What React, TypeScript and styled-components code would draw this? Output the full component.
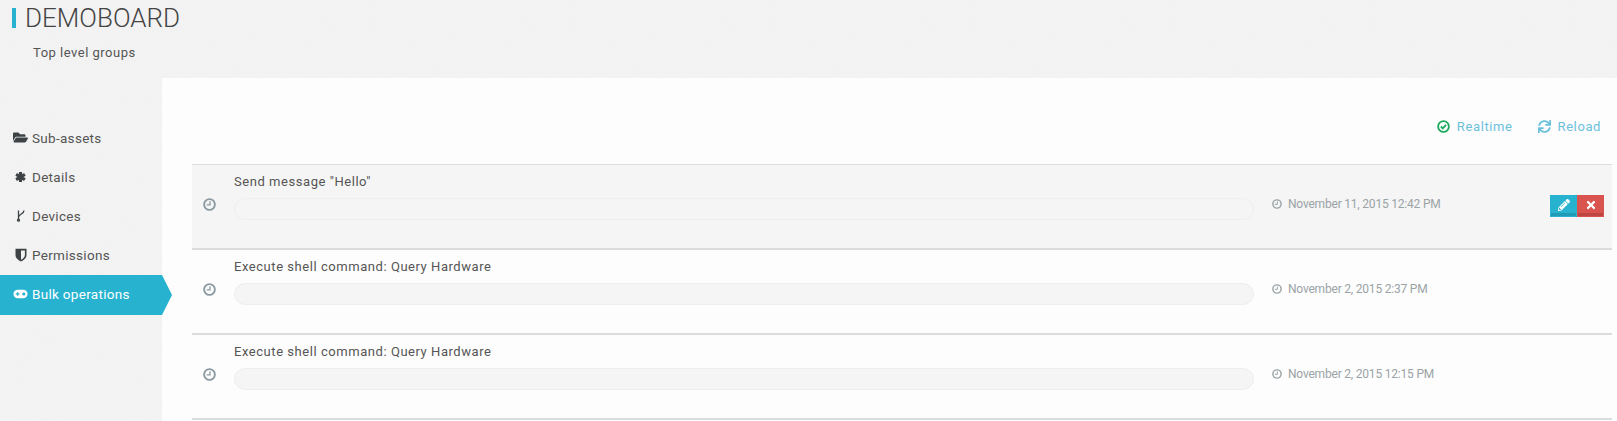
import React from "react"
import styled, { createGlobalStyle } from "styled-components"
import { FaFolderOpen, FaSync, FaPencilAlt, FaTimes } from "react-icons/fa"

const noise =
  "data:image/svg+xml,%3Csvg xmlns='http://www.w3.org/2000/svg' width='200' height='200'%3E%3Cfilter id='n'%3E%3CfeTurbulence type='fractalNoise' baseFrequency='0.9' numOctaves='2'/%3E%3CfeColorMatrix values='0 0 0 0 0.5 0 0 0 0 0.5 0 0 0 0 0.5 0 0 0 0.05 0'/%3E%3C/filter%3E%3Crect width='200' height='200' filter='url(%23n)'/%3E%3C/svg%3E"

const Global = createGlobalStyle`
  html, body {
    margin: 0;
    padding: 0;
    height: 421px;
    overflow: hidden;
    background: #f4f4f4 url("${noise}");
    font-family: Roboto, "Liberation Sans", sans-serif;
    color: #555;
  }
`

const Page = styled.div`
  width: 1617px;
  height: 421px;
  overflow: hidden;
`

const Header = styled.header`
  height: 78px;
  padding: 8px 0 0 12px;
  box-sizing: border-box;
`

const Title = styled.h1`
  margin: 0;
  padding-left: 9px;
  border-left: 4px solid #27b3d0;
  height: 20px;
  line-height: 20px;
  font-size: 26px;
  font-weight: 300;
  color: #444;
`

const Subtitle = styled.p`
  margin: 17px 0 0 21px;
  font-size: 13px;
  line-height: 16px;
  letter-spacing: 0.5px;
`

const Body = styled.div`
  display: flex;
  align-items: flex-start;
`

const Sidebar = styled.nav`
  width: 162px;
  flex: none;
  padding-top: 41px;
`

const NavItem = styled.a<{ $active?: boolean }>`
  position: relative;
  display: flex;
  align-items: center;
  box-sizing: border-box;
  height: ${(p) => (p.$active ? 40 : 39)}px;
  padding: 0 0 2px 13px;
  font-size: 13.5px;
  letter-spacing: 0.3px;
  color: ${(p) => (p.$active ? "#fff" : "#555")};
  background: ${(p) => (p.$active ? "#27b3d0" : "transparent")};

  ${(p) =>
    p.$active &&
    `
    &::after {
      content: "";
      position: absolute;
      left: 100%;
      top: 0;
      border-style: solid;
      border-width: 20px 0 20px 10px;
      border-color: transparent transparent transparent #27b3d0;
    }
  `}
`

const NavIcon = styled.span<{ $active?: boolean }>`
  width: 15px;
  margin-right: 4px;
  display: flex;
  justify-content: center;
  font-size: 15px;
  color: ${(p) => (p.$active ? "#fff" : "#3d4345")};
`

const Content = styled.main`
  flex: 1;
  height: 343px;
  background: #fdfdfd;
  padding: 0 5px 0 30px;
  box-sizing: border-box;
`

const Toolbar = styled.div`
  height: 86px;
  padding: 40px 11px 0 0;
  box-sizing: border-box;
  display: flex;
  justify-content: flex-end;
  gap: 25px;
`

const ToolLink = styled.a`
  display: flex;
  align-items: center;
  gap: 7px;
  height: 16px;
  font-size: 13px;
  letter-spacing: 0.6px;
  color: #6cc0dc;

  svg {
    width: 13px;
    height: 13px;
  }
`

const Row = styled.div<{ $hover?: boolean }>`
  height: ${(p) => (p.$hover ? 86 : 85)}px;
  box-sizing: border-box;
  display: flex;
  border-top: ${(p) => (p.$hover ? "1px solid #dcdcdc" : "0")};
  border-bottom: 2px solid #dcdcdc;
  background: ${(p) => (p.$hover ? "#f5f5f5" : "transparent")};
`

const RowIcon = styled.div`
  width: 42px;
  flex: none;
  padding-top: 33px;
  padding-left: 11px;
  box-sizing: border-box;
  color: #8a9aa0;
  line-height: 0;

  svg {
    width: 13px;
    height: 13px;
  }
`

const RowMain = styled.div`
  width: 1020px;
  flex: none;
  padding-top: 9px;
`

const RowTitle = styled.div`
  font-size: 13px;
  line-height: 16px;
  letter-spacing: 0.55px;
`

const Progress = styled.div`
  height: 22px;
  margin-top: 8px;
  box-sizing: border-box;
  border: 1px solid #eeeeee;
  border-radius: 11px;
  background: #f5f5f5;
`

const DateCell = styled.div`
  margin-left: 18px;
  padding-top: 32px;
  display: flex;
  align-items: flex-start;
  gap: 6px;
  font-size: 12px;
  line-height: 15px;
  letter-spacing: -0.2px;
  color: #9aa3a6;

  svg {
    width: 10px;
    height: 10px;
    margin-top: 2px;
  }
`

const Actions = styled.div`
  margin-left: auto;
  padding: 30px 8px 0 0;
  display: flex;
  align-items: flex-start;
`

const ActionButton = styled.button<{ $color: string; $shade: string }>`
  width: 27px;
  height: 22px;
  border: 0;
  padding: 0 0 2px;
  display: flex;
  align-items: center;
  justify-content: center;
  color: #fff;
  font-size: 12px;
  background: ${(p) => p.$color};
  box-shadow: inset 1px 0 0 ${(p) => p.$color}, inset -1px 0 0 ${(p) => p.$color},
    inset 0 -1px 0 ${(p) => p.$color}, inset 0 -4px 0 ${(p) => p.$shade};
`

const ClockIcon = () => (
  <svg viewBox="0 0 14 14" fill="none" stroke="currentColor">
    <circle cx="7" cy="7" r="5.8" strokeWidth="2" />
    <path d="M7.5 3.5V7.5H4" strokeWidth="1.4" />
  </svg>
)

const CheckIcon = () => (
  <svg viewBox="0 0 14 14" fill="none" stroke="#1eab5f">
    <circle cx="7" cy="7" r="5.8" strokeWidth="2" />
    <path d="M4.2 7l2 2 3.6-3.8" strokeWidth="2" />
  </svg>
)

const StarIcon = () => (
  <svg width="11" height="12" viewBox="0 0 12 12" stroke="currentColor" strokeWidth="3.4">
    <path d="M6 0.5V11.5M1.2 3.2L10.8 8.8M10.8 3.2L1.2 8.8" />
  </svg>
)

const ForkIcon = () => (
  <svg width="10" height="13" viewBox="0 0 10 13" fill="none" stroke="currentColor" strokeWidth="1.3">
    <path d="M2.5 1.5V11.5M8 1.5C8 5 2.5 5 2.5 8.5" />
    <circle cx="2.5" cy="11.2" r="1" />
  </svg>
)

const ShieldIcon = () => (
  <svg width="12" height="14" viewBox="0 0 12 14">
    <path d="M0.5 0.8H11.5V7C11.5 10.2 8.5 12.4 6 13.5C3.5 12.4 0.5 10.2 0.5 7Z" fill="currentColor" />
    <path d="M6 2.4H9.9V7C9.9 9.2 8 10.8 6 11.8Z" fill="#f2f2f2" />
  </svg>
)

const PadIcon = () => (
  <svg width="16" height="10" viewBox="0 0 16 10">
    <rect x="0.5" y="0.5" width="15" height="9" rx="4.5" fill="currentColor" />
    <path d="M3 4.2H4.2V3H5.6V4.2H6.8V5.6H5.6V6.8H4.2V5.6H3Z" fill="#27b3d0" />
    <circle cx="11.5" cy="5" r="1.7" fill="#27b3d0" />
  </svg>
)

const nav = [
  { label: "Sub-assets", icon: <FaFolderOpen /> },
  { label: "Details", icon: <StarIcon /> },
  { label: "Devices", icon: <ForkIcon /> },
  { label: "Permissions", icon: <ShieldIcon /> },
  { label: "Bulk operations", icon: <PadIcon />, active: true },
]

const rows = [
  { title: 'Send message "Hello"', date: "November 11, 2015 12:42 PM", hover: true },
  { title: "Execute shell command: Query Hardware", date: "November 2, 2015 2:37 PM" },
  { title: "Execute shell command: Query Hardware", date: "November 2, 2015 12:15 PM" },
]

const App = () => {
  return (
    <Page>
      <Global />
      <Header>
        <Title>DEMOBOARD</Title>
        <Subtitle>Top level groups</Subtitle>
      </Header>
      <Body>
        <Sidebar>
          {nav.map((item) => (
            <NavItem key={item.label} $active={item.active}>
              <NavIcon $active={item.active}>{item.icon}</NavIcon>
              {item.label}
            </NavItem>
          ))}
        </Sidebar>
        <Content>
          <Toolbar>
            <ToolLink>
              <CheckIcon />
              Realtime
            </ToolLink>
            <ToolLink>
              <FaSync />
              Reload
            </ToolLink>
          </Toolbar>
          {rows.map((row, i) => (
            <Row key={i} $hover={row.hover}>
              <RowIcon>
                <ClockIcon />
              </RowIcon>
              <RowMain>
                <RowTitle>{row.title}</RowTitle>
                <Progress />
              </RowMain>
              <DateCell>
                <ClockIcon />
                {row.date}
              </DateCell>
              {row.hover && (
                <Actions>
                  <ActionButton $color="#27b3d0" $shade="#1f9bb5">
                    <FaPencilAlt />
                  </ActionButton>
                  <ActionButton $color="#d9534f" $shade="#bf4743">
                    <FaTimes />
                  </ActionButton>
                </Actions>
              )}
            </Row>
          ))}
        </Content>
      </Body>
    </Page>
  )
}

export default App
